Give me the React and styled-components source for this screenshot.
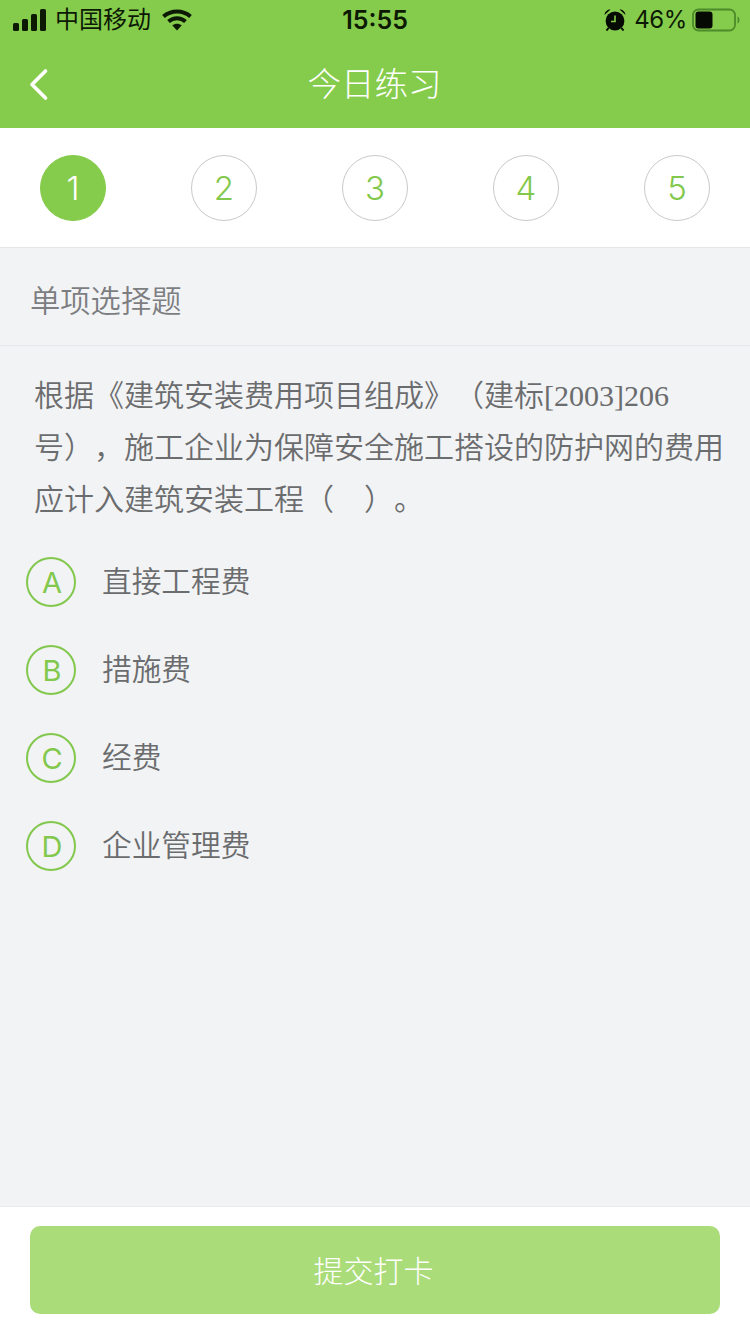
import styled, { createGlobalStyle } from 'styled-components'

const GlobalStyle = createGlobalStyle`
    html, body {
        margin: 0;
        padding: 0;
        background-color: #f2f3f5;
    }
    * {
        box-sizing: border-box;
    }
`

const Page = styled.div`
    width: 750px;
    height: 1334px;
    display: flex;
    flex-direction: column;
    overflow: hidden;
    background-color: #f2f3f5;
    font-family: "Liberation Sans", "Noto Sans CJK SC", sans-serif;
`

const Header = styled.header`
    background-color: #86cc4c;
    height: 128px;
    flex-shrink: 0;
`

const StatusBar = styled.div`
    height: 40px;
    padding: 0 10px 0 13px;
    display: grid;
    grid-template-columns: 1fr auto 1fr;
    align-items: center;
    color: #0c1a04;
`

const StatusLeft = styled.div`
    display: flex;
    align-items: center;
`

const StatusRight = styled.div`
    display: flex;
    align-items: center;
    justify-content: flex-end;
`

const Carrier = styled.span`
    font-size: 24px;
    line-height: 40px;
    margin-left: 8px;
    margin-right: 11px;
`

const Time = styled.span`
    font-family: "Inter", "Liberation Sans", sans-serif;
    font-size: 25px;
    font-weight: 600;
    line-height: 40px;
    margin-right: 3px;
`

const Percent = styled.span`
    font-family: "Inter", "Liberation Sans", sans-serif;
    font-size: 24px;
    letter-spacing: -0.400px;
    line-height: 40px;
    margin: 0 5px 0 8px;
`

const NavBar = styled.div`
    height: 88px;
    position: relative;
    display: flex;
    align-items: center;
    justify-content: center;
`

const BackButton = styled.button`
    position: absolute;
    left: 27px;
    top: 27px;
    width: 24px;
    height: 36px;
    padding: 0;
    border: none;
    background: none;
    display: flex;
`

const Title = styled.h1`
    margin: 2px 1px 0 0;
    font-size: 33.500px;
    font-weight: 300;
    line-height: 86px;
    color: #fff;
`

const Steps = styled.div`
    height: 120px;
    flex-shrink: 0;
    padding: 27px 40px 0;
    display: flex;
    justify-content: space-between;
    align-items: flex-start;
    background-color: #fff;
    border-bottom: 1px solid #e6e6e8;
`

const Step = styled.div`
    width: 66px;
    height: 66px;
    border-radius: 50%;
    display: flex;
    align-items: center;
    justify-content: center;
    font-family: "Inter", "Liberation Sans", sans-serif;
    font-size: 33px;
    font-weight: 350;
    color: ${(p) => (p.$active ? '#fff' : '#82c84c')};
    background-color: ${(p) => (p.$active ? '#86cc4c' : '#fff')};
    border: 1px solid ${(p) => (p.$active ? '#86cc4c' : '#c9c9c9')};
`

const Main = styled.main`
    flex: 1;
    min-height: 0;
`

const SectionTitle = styled.div`
    height: 98px;
    padding: 4px 0 0 30px;
    display: flex;
    align-items: center;
    border-bottom: 1px solid #e6e7ea;
    font-size: 30.300px;
    font-weight: 350;
    color: #7d7e81;
`

const Question = styled.p`
    margin: 0;
    padding: 24px 20px 0 34px;
    font-size: 30px;
    font-weight: 350;
    line-height: 52px;
    color: #6b6c6e;
    text-spacing-trim: space-all;
`

const Latin = styled.span`
    font-family: "Liberation Serif", serif;
`

const Options = styled.ul`
    list-style: none;
    margin: 0;
    padding: 31px 0 0 26px;
`

const Option = styled.li`
    height: 88px;
    display: flex;
    align-items: flex-start;
`

const OptionMark = styled.div`
    width: 50px;
    height: 50px;
    flex-shrink: 0;
    padding-left: 2px;
    border-radius: 50%;
    border: 2px solid #82c84c;
    display: flex;
    align-items: center;
    justify-content: center;
    font-family: "Inter", "Liberation Sans", sans-serif;
    font-size: 29px;
    font-weight: 400;
    color: #82c84c;
`

const OptionText = styled.span`
    margin-left: 26px;
    font-size: 29.700px;
    font-weight: 350;
    line-height: 50px;
    color: #6b6c6e;
`

const Footer = styled.footer`
    height: 128px;
    flex-shrink: 0;
    padding: 19px 30px 0;
    background-color: #fff;
    border-top: 1px solid #e9eaed;
`

const SubmitButton = styled.button`
    width: 690px;
    height: 88px;
    padding: 0 3px 2px 0;
    border: none;
    border-radius: 10px;
    background-color: #aadc7a;
    color: #fff;
    font-family: inherit;
    font-size: 30px;
    font-weight: 300;
`

const options = [
    { key: 'A', text: '直接工程费' },
    { key: 'B', text: '措施费' },
    { key: 'C', text: '经费' },
    { key: 'D', text: '企业管理费' },
]

function SignalIcon() {
    return (
        <svg width="34" height="22" viewBox="0 0 34 22" fill="#0c1a04">
            <rect x="0" y="14" width="6" height="8" rx="1.500" />
            <rect x="9" y="10" width="6" height="12" rx="1.500" />
            <rect x="18" y="5" width="6" height="17" rx="1.500" />
            <rect x="27" y="0" width="6" height="22" rx="1.500" />
        </svg>
    )
}

function WifiIcon() {
    return (
        <svg width="30" height="22" viewBox="0 0 30 22" fill="none" stroke="#0c1a04" strokeWidth="4">
            <path d="M1.500 7.500C9 .8 21 .8 28.500 7.500" />
            <path d="M6.500 12.500c5-4.400 12-4.400 17 0" />
            <path d="M15 21.500l-4.800-5.200c2.800-2.200 6.800-2.200 9.600 0z" fill="#0c1a04" stroke="none" />
        </svg>
    )
}

function AlarmIcon() {
    return (
        <svg width="22" height="22" viewBox="0 0 22 22" fill="#050a02">
            <circle cx="11" cy="12" r="9.400" />
            <path d="M.5 6C1 2.600 3.400.6 6.500.6zM21.500 6C21 2.600 18.600.6 15.500.6z" />
            <path d="M4.500 19l-2 2.500M17.500 19l2 2.500" stroke="#050a02" strokeWidth="2" />
            <path d="M11 6.500V12.500H7" fill="none" stroke="#86cc4c" strokeWidth="1.600" />
        </svg>
    )
}

function BatteryIcon() {
    return (
        <svg width="48" height="24" viewBox="0 0 48 24">
            <rect x="1" y="1.500" width="42" height="21" rx="5.500" fill="none" stroke="#4d8a2a" strokeWidth="1.800" />
            <rect x="3.500" y="3.500" width="17" height="17" rx="3" fill="#050a02" />
            <path d="M45.500 8.500c1.500.6 2 2 2 3.500s-.5 2.900-2 3.500z" fill="#4d8a2a" />
        </svg>
    )
}

function BackIcon() {
    return (
        <svg width="24" height="36" viewBox="0 0 24 36" fill="none" stroke="#fff" strokeWidth="3.600" strokeLinecap="round" strokeLinejoin="round">
            <path d="M18.500 4L5 17.500 18.500 31" />
        </svg>
    )
}

function App() {
    return (
        <Page>
            <GlobalStyle />
            <Header>
                <StatusBar>
                    <StatusLeft>
                        <SignalIcon />
                        <Carrier>中国移动</Carrier>
                        <WifiIcon />
                    </StatusLeft>
                    <Time>15:55</Time>
                    <StatusRight>
                        <AlarmIcon />
                        <Percent>46%</Percent>
                        <BatteryIcon />
                    </StatusRight>
                </StatusBar>
                <NavBar>
                    <BackButton>
                        <BackIcon />
                    </BackButton>
                    <Title>今日练习</Title>
                </NavBar>
            </Header>
            <Steps>
                {[1, 2, 3, 4, 5].map((n) => (
                    <Step key={n} $active={n === 1}>{n}</Step>
                ))}
            </Steps>
            <Main>
                <SectionTitle>单项选择题</SectionTitle>
                <Question>
                    根据《建筑安装费用项目组成》（建标<Latin>[2003]206</Latin>号），施工企业为保障安全施工搭设的防护网的费用应计入建筑安装工程（　）。
                </Question>
                <Options>
                    {options.map((o) => (
                        <Option key={o.key}>
                            <OptionMark>{o.key}</OptionMark>
                            <OptionText>{o.text}</OptionText>
                        </Option>
                    ))}
                </Options>
            </Main>
            <Footer>
                <SubmitButton>提交打卡</SubmitButton>
            </Footer>
        </Page>
    )
}

export default App
